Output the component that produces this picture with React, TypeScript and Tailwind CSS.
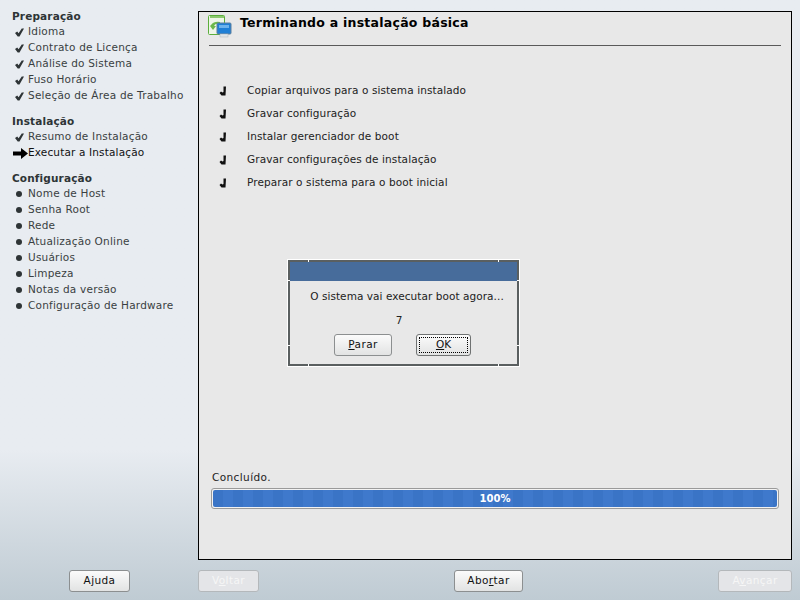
import React from 'react';

const font = { fontFamily: '"DejaVu Sans", sans-serif' };

const Check = () => (
  <svg width="9" height="9" viewBox="0 0 10 10" className="shrink-0">
    <path d="M0 5.5 L2.5 4 L4 5.8 L7.5 0.5 L10 0.5 L5 9.5 L3 9.5 Z" fill="#2e3436" />
  </svg>
);

const Arrow = () => (
  <svg width="15" height="11" viewBox="0 0 15 11" className="shrink-0">
    <path d="M0 3.5 H8 V0 L15 5.5 L8 11 V7.5 H0 Z" fill="#000" />
  </svg>
);

const Dot = () => <span className="w-[6px] h-[6px] rounded-full bg-[#2e3436] shrink-0 ml-[1px] mr-[3px]" />;

const TaskCheck = () => (
  <svg width="8" height="10" viewBox="0 0 8 10" className="shrink-0">
    <path d="M4.5 0.5 H7 L6.5 9.5 H2.5 L0.5 7 L2 5.5 L3.5 6.5 L4.5 6 Z" fill="#111" />
  </svg>
);

const Section = ({ title, children }: { title: string; children: React.ReactNode }) => (
  <div className="mb-[9px]">
    <div className="h-[16px] leading-[16px] pl-[12px] text-[10.5px] font-bold text-[#2e3436] tracking-[0.15px]">{title}</div>
    {children}
  </div>
);

const Step = ({ label, state }: { label: string; state: 'done' | 'current' | 'todo' }) => (
  <div className={`h-[16px] flex items-center text-[10.5px] text-[#3a3f42] tracking-[0.22px] ${state === 'current' ? 'pl-[13px]' : 'pl-[15px]'}`}>
    <span className={state === 'current' ? 'w-[15px] flex' : 'w-[13px] flex'}>
      {state === 'done' && <Check />}
      {state === 'current' && <Arrow />}
      {state === 'todo' && <Dot />}
    </span>
    <span className={state === 'current' ? 'text-[#111] tracking-[0.15px]' : ''}>{label}</span>
  </div>
);

const Btn = ({ children, width, disabled }: { children: React.ReactNode; width: string; disabled?: boolean }) => (
  <div
    className={`${width} h-[22px] rounded-[3px] border flex items-center justify-center text-[10.5px] tracking-[0.4px] ${
      disabled
        ? 'border-[#b4b8bb] bg-[#e4e5e8] text-[#f6f6f6]'
        : 'border-[#8c8f90] bg-gradient-to-b from-[#fbfbfb] to-[#e2e3e3] text-[#111]'
    }`}
  >
    <span>{children}</span>
  </div>
);

const tasks = [
  'Copiar arquivos para o sistema instalado',
  'Gravar configuração',
  'Instalar gerenciador de boot',
  'Gravar configurações de instalação',
  'Preparar o sistema para o boot inicial',
];

export default function App() {
  return (
    <div
      style={font}
      className="relative w-[800px] h-[600px] overflow-hidden flex flex-col bg-gradient-to-b from-[#e8ecf1] from-[75%] to-[#bfcbd3]"
    >
      <div className="flex flex-1 min-h-0 pt-[11px] pr-[8px]">
        <div className="w-[198px] shrink-0 -mt-[3px]">
          <Section title="Preparação">
            <Step state="done" label="Idioma" />
            <Step state="done" label="Contrato de Licença" />
            <Step state="done" label="Análise do Sistema" />
            <Step state="done" label="Fuso Horário" />
            <Step state="done" label="Seleção de Área de Trabalho" />
          </Section>
          <Section title="Instalação">
            <Step state="done" label="Resumo de Instalação" />
            <Step state="current" label="Executar a Instalação" />
          </Section>
          <Section title="Configuração">
            <Step state="todo" label="Nome de Host" />
            <Step state="todo" label="Senha Root" />
            <Step state="todo" label="Rede" />
            <Step state="todo" label="Atualização Online" />
            <Step state="todo" label="Usuários" />
            <Step state="todo" label="Limpeza" />
            <Step state="todo" label="Notas da versão" />
            <Step state="todo" label="Configuração de Hardware" />
          </Section>
        </div>

        <div className="flex-1 border border-black bg-[#e8e8e8] flex flex-col px-[12px] min-w-0">
          <div className="flex items-start h-[34px] border-b border-[#5a5a5a] mx-[-2px] shrink-0 pt-[3px]">
            <svg width="24" height="24" viewBox="0 0 24 24" className="shrink-0 mr-[8px] -ml-[1px]">
              <rect x="0.5" y="0.5" width="16" height="19" rx="1" fill="#eef6e8" stroke="#5cae3c" />
              <path d="M2 1 H16 V3 H2 Z" fill="#8cc96e" />
              <path d="M3 10 q3 -4 9 -3 l0 2 q-5 -1 -6 2 l2 0 l-3 4 l-3 -4 Z" fill="#6cb84c" />
              <rect x="9" y="8" width="14" height="11" rx="1" fill="#1f7fd6" stroke="#5d7f9c" />
              <rect x="11" y="10" width="10" height="3" fill="#6db2ec" />
              <rect x="12" y="19" width="8" height="3" fill="#dfe4e8" stroke="#aab4bb" strokeWidth="0.5" />
            </svg>
            <span className="text-[12.5px] font-bold text-black tracking-[0.25px] leading-[16px]">Terminando a instalação básica</span>
          </div>

          <div className="mt-[37px] flex flex-col gap-[7px] flex-1 min-h-0">
            {tasks.map(t => (
              <div key={t} className="h-[16px] flex items-center text-[10.5px] text-[#222] tracking-[0.1px]">
                <span className="w-[36px] pl-[8px] flex shrink-0"><TaskCheck /></span>
                {t}
              </div>
            ))}
          </div>

          <div className="text-[10.5px] text-[#222] tracking-[0.4px] leading-[16px] shrink-0 ml-px">Concluído.</div>
          <div className="mt-[3px] mb-[50px] h-[21px] rounded-[3px] border border-[#9a9a9a] bg-[#f2f2f2] p-[1px] shrink-0">
            <div className="h-full rounded-[2px] flex items-center justify-center text-[10px] font-bold text-white bg-[repeating-linear-gradient(90deg,#3a74c6_0px,#3a74c6_10px,#3f79cc_10px,#3f79cc_20px)]">
              100%
            </div>
          </div>
        </div>
      </div>

      <div className="h-[40px] shrink-0 flex pl-[69px] pr-[8px] pt-[10px]">
        <Btn width="w-[61px]">Ajuda</Btn>
        <div className="ml-[68px]">
          <Btn width="w-[61px]" disabled>V<u>o</u>ltar</Btn>
        </div>
        <div className="ml-[195px]">
          <Btn width="w-[69px]">Abo<u>r</u>tar</Btn>
        </div>
        <div className="ml-auto">
          <Btn width="w-[74px]" disabled>A<u>v</u>ançar</Btn>
        </div>
      </div>

      <div className="absolute left-[288px] top-[260px] w-[231px] h-[106px] bg-[#e8e8e8] border-2 border-[#5a5f60] outline outline-1 outline-white flex flex-col">
        <div className="h-[19px] bg-[#476c9b] shrink-0" />
        <div className="text-center text-[10.5px] text-[#222] tracking-[0.06px] mt-[7px] ml-[7px] leading-[16px]">O sistema vai executar boot agora...</div>
        <div className="text-center text-[10.5px] text-[#222] mt-[8px] leading-[16px] -ml-[9px]">7</div>
        <div className="flex pl-[44px] gap-[24px] mt-[6px]">
          <Btn width="w-[58px]"><u>P</u>arar</Btn>
          <div className="w-[55px] h-[22px] rounded-[3px] border border-[#6f7272] bg-gradient-to-b from-[#fbfbfb] to-[#e2e3e3] p-[2px]">
            <div className="h-full border border-dotted border-black flex items-center justify-center text-[10.5px] text-[#111]"><span><u>O</u>K</span></div>
          </div>
        </div>
        {/* resize handle ticks on the frame */}
        <span className="absolute left-[18px] -top-[2px] w-px h-[2px] bg-white" />
        <span className="absolute right-[18px] -top-[2px] w-px h-[2px] bg-white" />
        <span className="absolute left-[18px] -bottom-[2px] w-px h-[2px] bg-white" />
        <span className="absolute right-[18px] -bottom-[2px] w-px h-[2px] bg-white" />
        <span className="absolute -left-[2px] top-[18px] h-px w-[2px] bg-white" />
        <span className="absolute -right-[2px] top-[18px] h-px w-[2px] bg-white" />
        <span className="absolute -left-[2px] bottom-[18px] h-px w-[2px] bg-white" />
        <span className="absolute -right-[2px] bottom-[18px] h-px w-[2px] bg-white" />
      </div>
    </div>
  );
}
